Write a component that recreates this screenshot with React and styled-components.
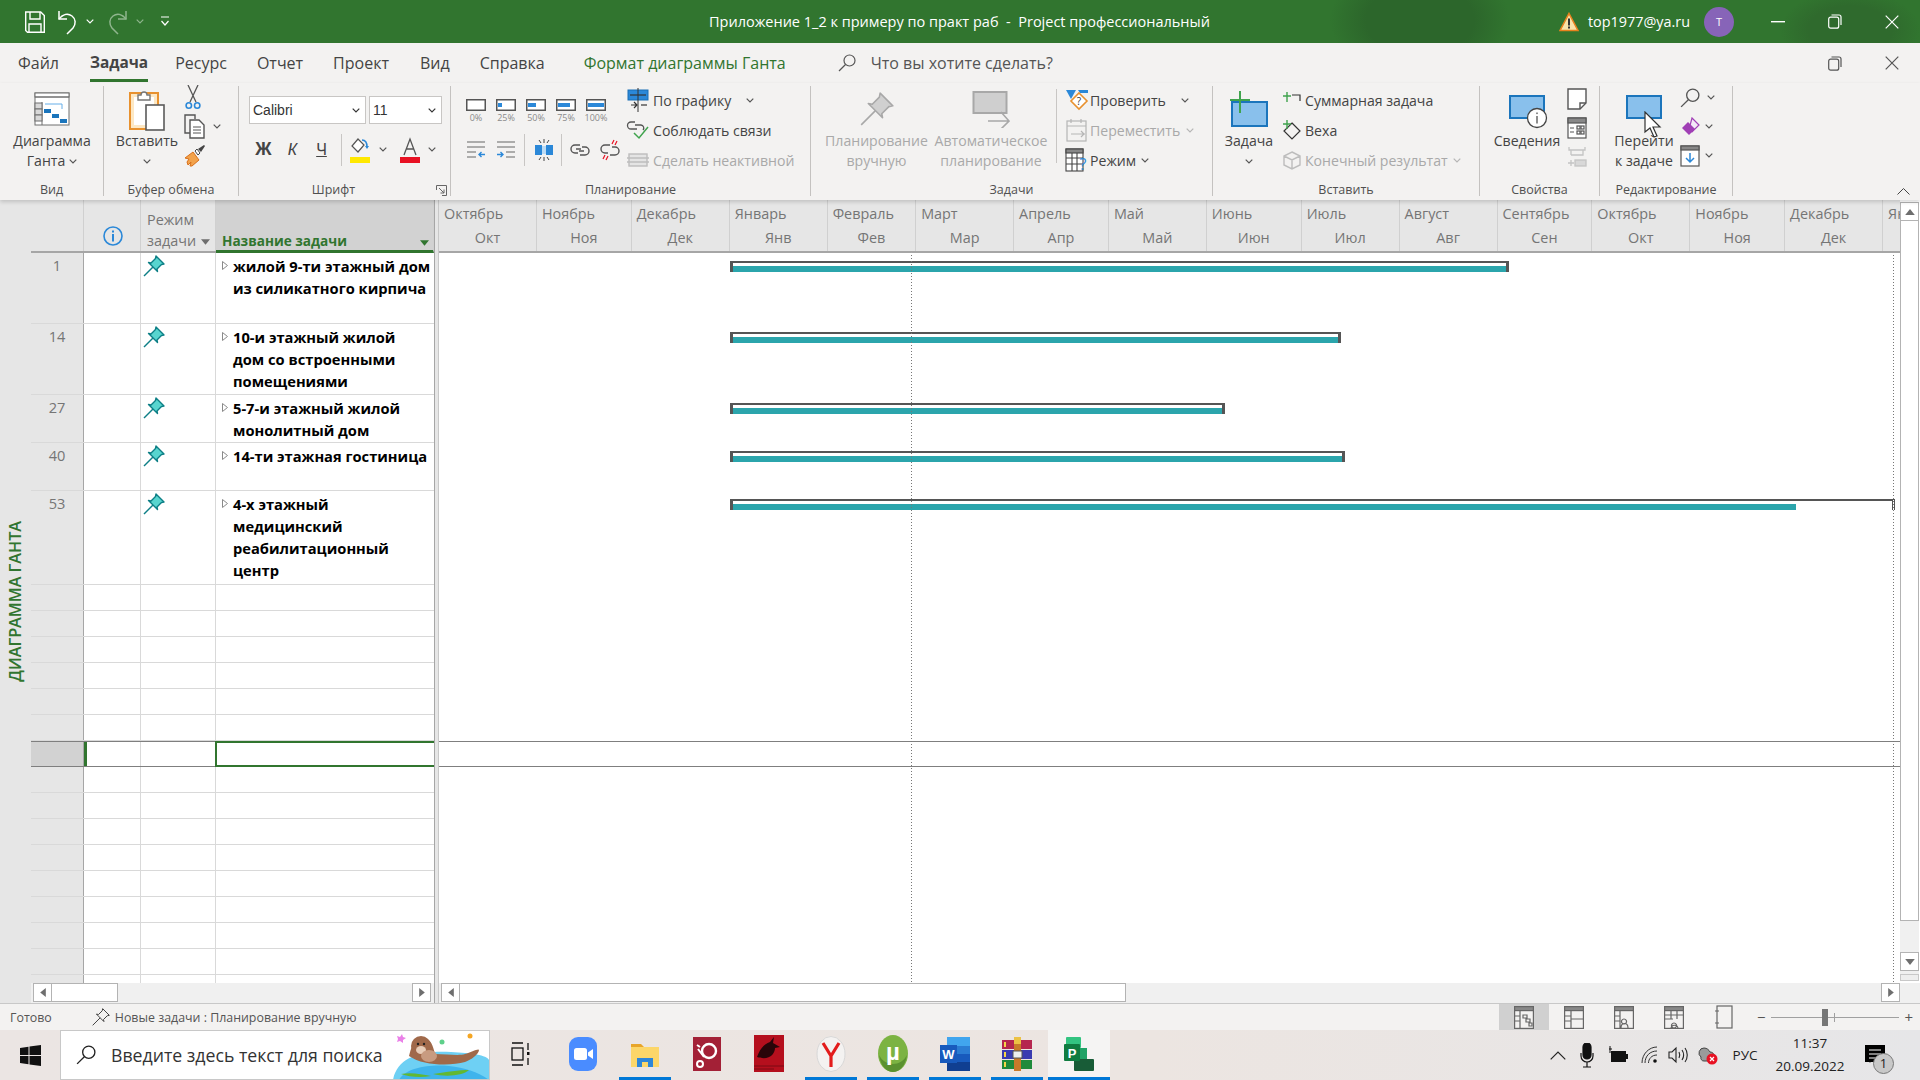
import React from 'react';
import styled, { createGlobalStyle } from 'styled-components';

const green = '#31752f';
const ribbonText = '#444444';
const disabledText = '#a9a9a9';

const GlobalStyle = createGlobalStyle`
  html, body { margin: 0; padding: 0; background: #fff; }
  body { font-family: "Open Sans", "Noto Sans", "Liberation Sans", sans-serif; }
  svg { display: block; flex: none; }
`;

const Page = styled.div`
  display: flex;
  flex-direction: column;
  width: 1920px;
  height: 1080px;
  overflow: hidden;
`;

/* ---------- title bar ---------- */
const TitleBar = styled.header`
  display: flex;
  align-items: center;
  flex: none;
  height: 43px;
  color: #fff;
  background:
    radial-gradient(ellipse 90px 60px at 1420px 20px, #2c662b 60%, transparent 100%),
    radial-gradient(ellipse 70px 40px at 1850px 30px, #2f6a2d 60%, transparent 100%),
    ${green};
`;

const QuickAccess = styled.div`
  display: flex;
  align-items: center;
  width: 709px;
  padding-left: 23px;
  box-sizing: border-box;
`;

const QuickButton = styled.span`
  display: flex;
  align-items: center;
  justify-content: center;
  width: ${({ $w }) => $w}px;
  margin-left: ${({ $ml = 0 }) => $ml}px;
`;

const DocTitle = styled.div`
  width: 500px;
  font-size: 14.5px;
  text-align: center;
  white-space: pre;
`;

const AccountArea = styled.div`
  display: flex;
  align-items: center;
  margin-left: auto;
`;

const UserName = styled.span`
  margin: 0 14px 0 9px;
  font-size: 14.4px;
`;

const Avatar = styled.span`
  display: flex;
  align-items: center;
  justify-content: center;
  width: 30px;
  height: 30px;
  margin-right: 15px;
  border-radius: 50%;
  background: #8764b8;
  font-size: 11px;
`;

const WindowButton = styled.span`
  display: flex;
  align-items: center;
  justify-content: center;
  width: 57px;
`;

/* ---------- tabs ---------- */
const TabsRow = styled.nav`
  display: flex;
  align-items: stretch;
  flex: none;
  height: 40px;
  background: #f3f2f1;
`;

const Tab = styled.span`
  display: flex;
  align-items: center;
  height: 33px;
  margin-top: 3px;
  margin-left: ${({ $x }) => $x}px;
  border-bottom: ${({ $active }) => ($active ? `3px solid ${green}` : '3px solid transparent')};
  color: ${({ $contextual }) => ($contextual ? green : ribbonText)};
  font-size: ${({ $active }) => ($active ? 15.4 : 16)}px;
  font-weight: ${({ $active }) => ($active ? 700 : 400)};
  white-space: nowrap;
`;

const TellMe = styled.div`
  display: flex;
  align-items: center;
  gap: 15px;
  margin-left: 52px;
  color: #555;
  font-size: 16px;
`;

const DocControls = styled.div`
  display: flex;
  align-items: center;
  margin-left: auto;
`;

/* ---------- ribbon ---------- */
const Ribbon = styled.section`
  position: relative;
  z-index: 2;
  display: flex;
  flex: none;
  height: 117px;
  padding-top: 3px;
  box-sizing: border-box;
  background: #f3f2f1;
  box-shadow: 0 2px 4px rgba(0, 0, 0, 0.16);
  color: ${ribbonText};
  font-size: 14.1px;
`;

const Group = styled.div`
  display: flex;
  flex-direction: column;
  flex: none;
  width: ${({ $w }) => $w}px;
  height: 110px;
  box-sizing: border-box;
  border-right: 1px solid #c4c2c0;
`;

const GroupBody = styled.div`
  display: flex;
  flex: none;
  height: 94px;
  padding-left: ${({ $pl = 0 }) => $pl}px;
`;

const GroupLabel = styled.div`
  position: relative;
  flex: none;
  height: 16px;
  padding-right: ${({ $pr = 0 }) => $pr}px;
  color: #505050;
  font-size: 12.5px;
  line-height: 20px;
  text-align: center;
`;

const Launcher = styled.span`
  position: absolute;
  top: 5px;
  right: 3px;
`;

const Large = styled.div`
  display: flex;
  flex-direction: column;
  align-items: center;
  flex: none;
  width: ${({ $w }) => $w}px;
  margin-left: ${({ $ml = 0 }) => $ml}px;
  color: ${({ $off }) => ($off ? disabledText : ribbonText)};
`;

const LargeIcon = styled.div`
  display: flex;
  align-items: center;
  justify-content: center;
  height: 45px;
`;

const LargeLine = styled.div`
  display: flex;
  align-items: center;
  gap: 4px;
  height: 20px;
  line-height: 20px;
  white-space: nowrap;
`;

const Stack = styled.div`
  display: flex;
  flex-direction: column;
  flex: none;
  margin-top: ${({ $mt = -1 }) => $mt}px;
`;

const StackRow = styled.div`
  display: flex;
  align-items: center;
  height: ${({ $h = 30 }) => $h}px;
  color: ${({ $off }) => ($off ? disabledText : ribbonText)};
  white-space: nowrap;
`;

const IconSlot = styled.span`
  display: flex;
  align-items: center;
  justify-content: center;
  flex: none;
  width: ${({ $w }) => $w}px;
  margin-right: ${({ $mr = 0 }) => $mr}px;
`;

const Divider = styled.span`
  flex: none;
  align-self: center;
  width: 1px;
  height: ${({ $h = 32 }) => $h}px;
  margin: ${({ $m = '0' }) => $m};
  background: #c8c6c4;
`;

const FontColumn = styled.div`
  display: flex;
  flex-direction: column;
  padding-top: 10px;
`;

const SelectRow = styled.div`
  display: flex;
  gap: 3px;
  height: 28px;
`;

const FieldBox = styled.div`
  display: flex;
  align-items: center;
  justify-content: space-between;
  width: ${({ $w }) => $w}px;
  padding: 0 5px 0 3px;
  box-sizing: border-box;
  border: 1px solid #c8c6c4;
  background: #fff;
  color: #333;
  font-family: "Liberation Sans", sans-serif;
  font-size: 14px;
`;

const FormatRow = styled.div`
  display: flex;
  align-items: center;
  height: 51px;
`;

const FormatLetter = styled.span`
  display: flex;
  justify-content: center;
  width: 29px;
  color: #444;
  font-family: "Liberation Sans", sans-serif;
  font-size: ${({ $b }) => ($b ? 18 : 16)}px;
  font-weight: ${({ $b }) => ($b ? 700 : 400)};
  font-style: ${({ $i }) => ($i ? 'italic' : 'normal')};
  text-decoration: ${({ $u }) => ($u ? 'underline' : 'none')};
`;

const PercentColumn = styled.div`
  display: flex;
  flex-direction: column;
  flex: none;
  width: 164px;
  padding-top: 13px;
`;

const PercentRow = styled.div`
  display: flex;
  height: 33px;
`;

const PercentItem = styled.div`
  display: flex;
  flex-direction: column;
  align-items: center;
  gap: 1px;
  width: 30px;
  color: #8a8a8a;
  font-size: 9px;
  line-height: 11px;
`;

const PlanRow = styled.div`
  display: flex;
  align-items: center;
  height: 36px;
`;

const Collapse = styled.span`
  position: absolute;
  right: 10px;
  bottom: 5px;
`;

/* ---------- workspace ---------- */
const Workspace = styled.main`
  display: flex;
  flex: 1;
  min-height: 0;
`;

const SideStrip = styled.aside`
  display: flex;
  align-items: center;
  justify-content: center;
  flex: none;
  width: 31px;
  padding-right: 2px;
  box-sizing: border-box;
  background: #e6e6e6;
`;

const SideLabel = styled.span`
  writing-mode: vertical-rl;
  transform: rotate(180deg);
  color: ${green};
  font-size: 16.2px;
  font-weight: 600;
  white-space: nowrap;
`;

const ViewArea = styled.div`
  display: flex;
  flex-direction: column;
  flex: 1;
  min-width: 0;
`;

const Panes = styled.div`
  display: flex;
  flex: 1;
  min-height: 0;
`;

const TablePane = styled.div`
  flex: none;
  width: 403px;
  overflow: hidden;
`;

const TableRow = styled.div`
  display: grid;
  grid-template-columns: 53px 57px 75px 218px;
  height: ${({ $h }) => $h}px;
  box-sizing: border-box;
  border-top: ${({ $selected }) => ($selected ? '1px solid #7f7f7f' : 'none')};
  border-bottom: 1px solid ${({ $selected }) => ($selected ? '#7f7f7f' : '#d9d9d9')};
`;

const HeaderRow = styled(TableRow)`
  border-bottom: 2px solid #a6a6a6;
  background: #e6e6e6;
`;

const HeadCell = styled.div`
  display: flex;
  align-items: ${({ $center }) => ($center ? 'center' : 'flex-end')};
  justify-content: ${({ $center }) => ($center ? 'center' : 'flex-start')};
  padding: ${({ $center }) => ($center ? '20px 0 0 1px' : '0 4px 0 6px')};
  box-sizing: border-box;
  border-right: 1px solid #d0d0d0;
  color: #757575;
  font-size: 14.4px;
  line-height: 21px;
  white-space: nowrap;
`;

const NameHead = styled(HeadCell)`
  justify-content: space-between;
  margin-bottom: -2px;
  padding-bottom: 0;
  border-bottom: 3px solid ${green};
  background: #d2d2d2;
  color: ${green};
  font-size: 13.6px;
  font-weight: 700;
  line-height: 18px;
`;

const HeadArrow = styled.span`
  display: inline-block;
  margin-left: 5px;
  vertical-align: middle;
`;

const NameArrow = styled.span`
  margin-bottom: 4px;
`;

const RowHead = styled.div`
  box-sizing: border-box;
  padding-top: 1px;
  border-right: 1px solid #a6a6a6;
  background: ${({ $selected }) => ($selected ? '#d2d2d2' : '#e6e6e6')};
  color: #757575;
  font-size: 14.6px;
  line-height: 22px;
  text-align: center;
`;

const InfoCell = styled.div`
  border-right: 1px solid #d9d9d9;
  ${({ $selected }) => ($selected ? `box-shadow: inset 3px 0 0 ${green};` : '')}
`;

const ModeCell = styled.div`
  box-sizing: border-box;
  padding: 1px 0 0 1px;
  border-right: 1px solid #d9d9d9;
`;

const NameCell = styled.div`
  display: flex;
  box-sizing: border-box;
  padding: 0 0 0 4px;
  border-left: 1px solid #d9d9d9;
  margin-left: -1px;
  ${({ $selected }) => ($selected ? `border: 2px solid ${green}; border-right: none; margin-top: -1px; margin-bottom: -1px;` : '')}
`;

const Expander = styled.span`
  flex: none;
  width: 11px;
  padding: 8px 0 0 2px;
`;

const TaskName = styled.div`
  color: #000;
  font-size: 14.7px;
  font-weight: 700;
  line-height: 22px;
  padding-top: 2px;
  white-space: nowrap;
`;

const Splitter = styled.div`
  flex: none;
  width: 3px;
  border-left: 1px solid #a6a6a6;
  border-right: 1px solid #c8c8c8;
  background: #e6e6e6;
`;

const ChartPane = styled.div`
  position: relative;
  flex: none;
  width: 1461px;
  overflow: hidden;
`;

const TimeHeader = styled.div`
  display: flex;
  height: 53px;
  box-sizing: border-box;
  border-bottom: 2px solid #a6a6a6;
  background: #e6e6e6;
`;

const Month = styled.div`
  flex: none;
  width: ${({ $w }) => $w}px;
  box-sizing: border-box;
  padding-top: 2px;
  border-right: 1px solid #d0d0d0;
  color: #757575;
  font-size: 14.4px;
  line-height: 24px;
  white-space: nowrap;
`;

const MonthFull = styled.div`
  padding-left: 5px;
`;

const MonthShort = styled.div`
  text-align: center;
`;

const ChartRow = styled.div`
  height: ${({ $h }) => $h}px;
  box-sizing: border-box;
  padding-top: 8px;
  border-top: ${({ $selected }) => ($selected ? '1px solid #7f7f7f' : 'none')};
  border-bottom: ${({ $selected }) => ($selected ? '1px solid #7f7f7f' : 'none')};
`;

const SummaryBar = styled.div`
  width: ${({ $w }) => $w}px;
  height: 11px;
  margin-left: 291px;
  box-sizing: border-box;
  border-style: solid;
  border-color: #555;
  border-width: 2px 3px 0 3px;
  border-right-style: ${({ $open }) => ($open ? 'double' : 'solid')};
`;

const BarFill = styled.div`
  width: ${({ $w }) => $w};
  height: 6px;
  margin-top: 3px;
  background: #2ba5ac;
`;

const DateLine = styled.div`
  position: absolute;
  top: 55px;
  bottom: 0;
  left: ${({ $x }) => $x}px;
  width: 1px;
  background: repeating-linear-gradient(#777 0 1px, transparent 1px 3px);
`;

const VScroll = styled.div`
  display: flex;
  flex-direction: column;
  flex: none;
  width: 19px;
  margin-top: 2px;
  margin-bottom: 2px;
  box-sizing: border-box;
  background: #f0f0f0;
`;

const ScrollBtn = styled.div`
  display: flex;
  align-items: center;
  justify-content: center;
  flex: none;
  width: 19px;
  height: 19px;
  box-sizing: border-box;
  border: 1px solid #b3b3b3;
  background: #fff;
`;

const VThumb = styled.div`
  flex: none;
  height: 700px;
  box-sizing: border-box;
  border: 1px solid #b3b3b3;
  border-width: 0 1px 1px;
  background: #fff;
`;

const VGap = styled.div`
  flex: 1;
`;

const VGrip = styled.div`
  flex: none;
  height: 5px;
  margin-top: 3px;
  border: 1px solid #c8c8c8;
  background: #eee;
`;

const HScrollRow = styled.div`
  display: flex;
  flex: none;
  height: 20px;
`;

const HScroll = styled.div`
  display: flex;
  flex: none;
  width: ${({ $w }) => $w}px;
  padding-left: 2px;
  box-sizing: border-box;
  background: #f0f0f0;
`;

const HThumb = styled.div`
  flex: none;
  width: ${({ $w }) => $w}px;
  height: 19px;
  box-sizing: border-box;
  border: 1px solid #b3b3b3;
  border-left: none;
  background: #fff;
`;

const HEnd = styled.div`
  margin-left: auto;
  margin-right: ${({ $mr = 3 }) => $mr}px;
`;

/* ---------- status bar ---------- */
const StatusBar = styled.footer`
  display: flex;
  align-items: stretch;
  flex: none;
  height: 27px;
  box-sizing: border-box;
  border-top: 1px solid #c8c8c8;
  background: #f3f2f1;
  color: #555;
  font-size: 12.4px;
`;

const StatusText = styled.span`
  display: flex;
  align-items: center;
  gap: 4px;
  margin-left: ${({ $ml }) => $ml}px;
  white-space: nowrap;
`;

const ViewButtons = styled.div`
  display: flex;
  margin-left: auto;
`;

const ViewButton = styled.span`
  display: flex;
  align-items: center;
  justify-content: center;
  width: 50px;
  background: ${({ $active }) => ($active ? '#d0d0d0' : 'transparent')};
`;

const Zoom = styled.div`
  display: flex;
  align-items: center;
  width: 171px;
  padding: 0 7px 0 8px;
  box-sizing: border-box;
  color: #555;
  font-size: 15px;
`;

const ZoomTrack = styled.div`
  position: relative;
  flex: 1;
  height: 1px;
  margin: 0 5px;
  background: #a0a0a0;
`;

const ZoomThumb = styled.span`
  position: absolute;
  top: -8px;
  left: 51px;
  width: 6px;
  height: 17px;
  background: #767676;
`;

const ZoomTick = styled.span`
  position: absolute;
  top: -4px;
  left: 63px;
  width: 1px;
  height: 9px;
  background: #a0a0a0;
`;

/* ---------- taskbar ---------- */
const Taskbar = styled.div`
  display: flex;
  align-items: stretch;
  flex: none;
  height: 50px;
  background: linear-gradient(90deg, #ebe5e3 0%, #ece5e1 60%, #e6e6e8 100%);
`;

const StartButton = styled.span`
  display: flex;
  align-items: center;
  justify-content: center;
  flex: none;
  width: 60px;
`;

const SearchBox = styled.div`
  display: flex;
  align-items: center;
  flex: none;
  width: 430px;
  overflow: hidden;
  box-sizing: border-box;
  border: 1px solid #c8c8c8;
  background: #fff;
  color: #333;
  font-size: 17.7px;
`;

const SearchHint = styled.span`
  flex: 1;
  white-space: nowrap;
`;

const TaskButton = styled.span`
  display: flex;
  align-items: center;
  justify-content: center;
  flex: none;
  width: ${({ $active }) => ($active ? 62 : 52)}px;
  margin: ${({ $active }) => ($active ? '0' : '0 5px')};
  box-sizing: border-box;
  border-bottom: 3px solid ${({ $open }) => ($open ? '#0078d7' : 'transparent')};
  background: ${({ $active }) => ($active ? '#f5f4f3' : 'transparent')};
`;

const Tray = styled.div`
  display: flex;
  align-items: stretch;
  margin-left: auto;
  padding-right: 19px;
  color: #222;
`;

const TrayItem = styled.span`
  display: flex;
  align-items: center;
  justify-content: center;
  flex: none;
  width: ${({ $w }) => $w}px;
  font-size: 13.5px;
`;

const Clock = styled(TrayItem)`
  flex-direction: column;
  gap: 4px;
  line-height: 19px;
`;

const NoticeBadge = styled.span`
  position: absolute;
  right: -9px;
  bottom: -9px;
  width: 19px;
  height: 19px;
  border: 1px solid #777;
  border-radius: 50%;
  background: #c8c8c8;
  font-size: 13px;
  line-height: 19px;
  text-align: center;
`;

const NoticeIcon = styled.span`
  position: relative;
  display: block;
  width: 20px;
  height: 20px;
  margin-right: 6px;
`;

const CursorHolder = styled.span`
  position: absolute;
  top: 22px;
  left: 22px;
`;

const CardHolder = styled.span`
  position: relative;
  display: block;
`;

const InfoHolder = styled.span`
  position: absolute;
  right: 1px;
  bottom: 0;
`;

/* ---------- drawn icons ---------- */
const Chevron = ({ color = '#555', w = 8 }) => (
  <svg width={w} height="5" viewBox="0 0 8 5">
    <path d="M.7.7 4 4l3.3-3.3" fill="none" stroke={color} strokeWidth="1.2" />
  </svg>
);

const Tri = ({ dir = 'down', color = '#6e6e6e', size = 9 }) => {
  const points = { down: '0,0 8,0 4,5', up: '0,5 8,5 4,0', left: '5,0 5,8 0,4', right: '0,0 0,8 5,4' }[dir];
  const horizontal = dir === 'left' || dir === 'right';
  return (
    <svg width={horizontal ? 6 : size} height={horizontal ? size : 6} viewBox={horizontal ? '0 0 5 8' : '0 0 8 5'}>
      <polygon points={points} fill={color} />
    </svg>
  );
};

const SaveIcon = () => (
  <svg width="22" height="24" viewBox="0 0 22 24" fill="none" stroke="#fff" strokeWidth="1.4">
    <path d="M1.7 2h15l3.6 3.6v16.7H3.5L1.7 20.5z" />
    <path d="M6 2v7h10V2M5 22v-8h12v8" />
  </svg>
);

const UndoIcon = ({ flip, color = '#fff' }) => (
  <svg width="22" height="26" viewBox="0 0 22 26" fill="none" stroke={color} strokeWidth="1.5">
    <g transform={flip ? 'translate(22 0) scale(-1 1)' : undefined}>
      <path d="M2 2v8h8" />
      <path d="M2 10c4-5 9-6 13-3 4 3 4 8 1 12l-6 6" />
    </g>
  </svg>
);

const QatIcon = () => (
  <svg width="10" height="11" viewBox="0 0 10 11" fill="none" stroke="#fff" strokeWidth="1.2">
    <path d="M1 1h8M1.5 5 5 9l3.5-4" />
  </svg>
);

const WarningIcon = () => (
  <svg width="20" height="20" viewBox="0 0 20 20">
    <path d="M10 1.5 19 18.5H1z" fill="#f9e3a8" stroke="#e8821e" strokeWidth="1.6" />
    <rect x="9" y="6.5" width="2" height="7" fill="#333" />
    <rect x="9" y="14.5" width="2" height="2" fill="#333" />
  </svg>
);

const MinIcon = () => (
  <svg width="14" height="2" viewBox="0 0 14 2"><rect width="14" height="1.4" fill="#fff" /></svg>
);

const RestoreIcon = ({ color = '#fff' }) => (
  <svg width="14" height="15" viewBox="0 0 14 15" fill="none" stroke={color} strokeWidth="1.2">
    <rect x=".7" y="3.2" width="10" height="11" rx="2" />
    <path d="M3.5 1h7.5a2 2 0 0 1 2 2v8" />
  </svg>
);

const CloseIcon = ({ color = '#fff' }) => (
  <svg width="14" height="14" viewBox="0 0 14 14" stroke={color} strokeWidth="1.2">
    <path d="M.7.7l12.6 12.6M13.3.7.7 13.3" />
  </svg>
);

const SearchIcon = ({ size = 18, color = '#555' }) => (
  <svg width={size} height={size} viewBox="0 0 18 18" fill="none" stroke={color} strokeWidth="1.2">
    <circle cx="11.5" cy="6.5" r="5.5" />
    <path d="M7.5 10.5 1 17" />
  </svg>
);

const GanttIcon = () => (
  <svg width="36" height="34" viewBox="0 0 36 34">
    <rect x="1" y="1" width="34" height="32" fill="#fff" stroke="#6e6e6e" />
    <rect x="1" y="1" width="34" height="4" fill="#fff" stroke="#6e6e6e" />
    <path d="M1 5h34M8 10v23" stroke="#6e6e6e" fill="none" />
    <rect x="1" y="11" width="7" height="6" fill="#d8d8d8" stroke="#6e6e6e" />
    <rect x="1" y="17" width="7" height="6" fill="#d8d8d8" stroke="#6e6e6e" />
    <rect x="1" y="23" width="7" height="6" fill="#d8d8d8" stroke="#6e6e6e" />
    <path d="M11 12h17v5" fill="none" stroke="#66aee8" />
    <rect x="10" y="17" width="7" height="4" fill="#1b75bc" />
    <rect x="18" y="22" width="7" height="4" fill="#1b75bc" />
    <rect x="26" y="27" width="7" height="4" fill="#1b75bc" />
  </svg>
);

const PasteIcon = () => (
  <svg width="36" height="44" viewBox="0 0 36 44">
    <rect x="1" y="6" width="28" height="36" fill="#fde8c4" stroke="#e8912e" strokeWidth="2" />
    <rect x="5" y="10" width="20" height="28" fill="#fff" />
    <path d="M9 8h3a3 3 0 0 1 6 0h3v5H9z" fill="#fff" stroke="#767676" strokeWidth="1.4" />
    <rect x="17" y="18" width="18" height="25" fill="#fff" stroke="#5a5a5a" strokeWidth="1.6" />
  </svg>
);

const CutIcon = () => (
  <svg width="16" height="25" viewBox="0 0 16 25" fill="none">
    <path d="M3 0 11 17M13 0 5 17" stroke="#555" strokeWidth="1.3" />
    <circle cx="3.8" cy="20.5" r="2.7" stroke="#2b88d8" strokeWidth="1.6" />
    <circle cx="12.2" cy="20.5" r="2.7" stroke="#2b88d8" strokeWidth="1.6" />
  </svg>
);

const CopyIcon = () => (
  <svg width="22" height="25" viewBox="0 0 22 25" fill="none" stroke="#555" strokeWidth="1.4">
    <path d="M9 19H1V1h10v4" />
    <path d="M6 6h9l5 5v13H6z" fill="#fff" />
    <path d="M9 13h8M9 16h8M9 19h8" strokeWidth="1" />
  </svg>
);

const BrushIcon = () => (
  <svg width="22" height="23" viewBox="0 0 22 23">
    <path d="M1 14l8-6 6 8-7 6H6l1-4-3 3-1-3 2-3z" fill="#f2a24b" stroke="#d9701a" />
    <path d="M11 7l2-2 3 4-2 2z" fill="#fff" stroke="#444" />
    <path d="M14 5l6-4 1 1-4 6z" fill="#444" />
  </svg>
);

const FillIcon = () => (
  <svg width="20" height="26" viewBox="0 0 20 26">
    <path d="M8 2l6 6-6 7-6-6z" fill="#fff" stroke="#555" strokeWidth="1.2" />
    <path d="M12 3c4 0 5 3 5 7" fill="none" stroke="#2b88d8" strokeWidth="1.6" />
    <path d="M17 12l-2-3h4z" fill="#2b88d8" />
    <rect y="20" width="20" height="6" fill="#ffe800" />
  </svg>
);

const FontColorIcon = () => (
  <svg width="20" height="26" viewBox="0 0 20 26">
    <path d="M4 18 10 2l6 16M6 12h8" fill="none" stroke="#555" strokeWidth="1.3" />
    <rect y="20" width="20" height="6" fill="#e81123" />
  </svg>
);

const LauncherIcon = () => (
  <svg width="11" height="11" viewBox="0 0 11 11" fill="none" stroke="#666">
    <path d="M.5 5V.5H10.5V10.5H6M3 3l5 5M8 4.5V8H4.5" />
  </svg>
);

const PercentIcon = ({ fill }) => (
  <svg width="20" height="12" viewBox="0 0 20 12">
    <rect x=".75" y=".75" width="18.5" height="10.5" fill="#fff" stroke="#555" strokeWidth="1.5" />
    {fill > 0 && <rect x="2" y="4" width={fill} height="4" fill="#2b88d8" />}
  </svg>
);

const OutdentIcon = ({ flip }) => (
  <svg width="20" height="20" viewBox="0 0 20 20">
    <g transform={flip ? 'translate(20 0) scale(-1 1)' : undefined}>
      <path d="M1 2h18M1 7h18M1 12h9M1 17h9" stroke="#666" strokeWidth="1.2" />
      <path d="M19 14.5h-6M15.5 12 13 14.5l2.5 2.5" fill="none" stroke="#2b88d8" strokeWidth="1.4" />
    </g>
  </svg>
);

const SplitIcon = () => (
  <svg width="20" height="24" viewBox="0 0 20 24">
    <rect x="1" y="7" width="7" height="10" fill="#2b88d8" />
    <rect x="12" y="7" width="7" height="10" fill="#2b88d8" />
    <rect x="8" y="8" width="4" height="8" fill="#bcdcf5" />
    <path d="M10 1v4M5 2l2 3M15 2l-2 3M10 19v4M5 22l2-3M15 22l-2-3" stroke="#444" />
  </svg>
);

const LinkIcon = ({ broken }) => (
  <svg width="22" height="22" viewBox="0 0 22 22" fill="none" stroke="#555" strokeWidth="1.4">
    <path d="M11 6H6a4 4 0 0 0 0 8h3" />
    <path d="M11 16h5a4 4 0 0 0 0-8h-3" />
    {!broken && <path d="M7 10h5M15 12h-5" />}
    {broken && <path d="M15 1l-2 4M18 2l-2 4M7 21l2-4M4 20l2-4" stroke="#e81123" strokeWidth="1.2" />}
  </svg>
);

const ScheduleIcon = () => (
  <svg width="22" height="24" viewBox="0 0 22 24" fill="none">
    <rect x="1" y="2" width="20" height="10" fill="#2b88d8" stroke="#1a6fb5" />
    <path d="M3 7h16" stroke="#333" strokeWidth="1.2" />
    <path d="M11 0v24" stroke="#333" />
    <path d="M4 17h6M7 14l3 3-3 3" stroke="#333" strokeWidth="1.2" />
    <path d="M14 17h6" stroke="#333" strokeWidth="1.2" />
  </svg>
);

const RespectIcon = () => (
  <svg width="24" height="22" viewBox="0 0 24 22" fill="none">
    <path d="M9 3H5a3 3 0 0 0 0 7h6" stroke="#555" strokeWidth="1.3" />
    <path d="M9 6h6a3 3 0 0 1 2 5" stroke="#555" strokeWidth="1.3" />
    <path d="M8 14l5 5 9-11" stroke="#3fa34d" strokeWidth="1.5" />
  </svg>
);

const InactiveIcon = () => (
  <svg width="22" height="14" viewBox="0 0 22 14" fill="none" stroke="#bdbdbd" strokeWidth="1.4">
    <rect x="2" y="1" width="18" height="12" fill="#e4e4e4" />
    <path d="M0 5h22M0 9h22" />
  </svg>
);

const PinIcon = ({ size = 24, fill = '#58d5cf', stroke = '#0d7f86', sw = 1.4 }) => (
  <svg width={size} height={size} viewBox="0 0 24 24">
    <path d="M14 2l8 8-2.5.5L15 15l.5 2.5-9-9L9 9l4.5-4.5z" fill={fill} stroke={stroke} strokeWidth={sw} strokeLinejoin="round" />
    <path d="M11 13l-9 9" stroke={stroke} strokeWidth={sw} />
  </svg>
);

const AutoIcon = () => (
  <svg width="38" height="38" viewBox="0 0 38 38" fill="none">
    <rect x="1.5" y="2" width="33" height="21" fill="#cfcfcf" stroke="#a8a8a8" strokeWidth="2" />
    <path d="M16 31h20M29 22l8 9-8 8" stroke="#a8a8a8" strokeWidth="1.6" />
  </svg>
);

const InspectIcon = () => (
  <svg width="24" height="22" viewBox="0 0 24 22">
    <path d="M1 1h10l-5 9z" fill="#2b88d8" />
    <path d="M13 1h10v3l-8 0z" fill="#2b88d8" />
    <path d="M14 4l8 8-8 8-8-8z" fill="#fff" stroke="#e8912e" strokeWidth="1.6" />
    <text x="14" y="16" fontSize="10" textAnchor="middle" fill="#333">?</text>
  </svg>
);

const MoveIcon = () => (
  <svg width="22" height="24" viewBox="0 0 22 24" fill="none" stroke="#b5b5b5" strokeWidth="1.2">
    <rect x="1" y="3" width="19" height="20" />
    <path d="M1 8h19M5 1v4M15 1v4M5 16h14M15 13l3 3-3 3" />
  </svg>
);

const ModeIcon = () => (
  <svg width="24" height="24" viewBox="0 0 24 24" fill="none" stroke="#444" strokeWidth="1.1">
    <rect x="1" y="1" width="17" height="22" fill="#fff" />
    <rect x="1" y="1" width="17" height="4" fill="#888" />
    <path d="M1 10h17M1 16h17M7 5v18M12 5v18" />
    <text x="18" y="22" fontSize="16" fill="#2b88d8" stroke="none" textAnchor="middle">?</text>
  </svg>
);

const NewTaskIcon = () => (
  <svg width="38" height="36" viewBox="0 0 38 36">
    <rect x="2" y="11" width="35" height="24" fill="#89c0ec" stroke="#1b75bc" strokeWidth="2" />
    <path d="M10 0v22M0 9h20" stroke="#3fa34d" strokeWidth="2" />
  </svg>
);

const SummaryIcon = () => (
  <svg width="18" height="18" viewBox="0 0 18 18" fill="none">
    <path d="M4 1v10M0 5h8" stroke="#3fa34d" strokeWidth="1.4" />
    <path d="M9 4h8v6" stroke="#333" strokeWidth="1.2" />
  </svg>
);

const MilestoneIcon = () => (
  <svg width="20" height="20" viewBox="0 0 20 20" fill="none">
    <path d="M10 3l8 8-8 8-8-8z" stroke="#333" strokeWidth="1.2" />
    <path d="M5 0v9M1 4h8" stroke="#3fa34d" strokeWidth="1.4" />
  </svg>
);

const DeliverableIcon = () => (
  <svg width="20" height="20" viewBox="0 0 20 20" fill="none" stroke="#bdbdbd" strokeWidth="1.4">
    <path d="M10 2l8 4v9l-8 4-8-4V6zM2 6l8 4 8-4M10 10v9" />
  </svg>
);

const BlueCard = () => (
  <svg width="44" height="40" viewBox="0 0 44 40">
    <rect x="5" y="7" width="34" height="22" fill="#89c0ec" stroke="#1b75bc" strokeWidth="2" />
  </svg>
);

const NoteIcon = () => (
  <svg width="20" height="22" viewBox="0 0 20 22" fill="#fff" stroke="#555" strokeWidth="1.4">
    <path d="M1 1h18v14l-6 6H1z" />
    <path d="M13 21v-6h6" fill="none" />
  </svg>
);

const DetailsIcon = () => (
  <svg width="20" height="22" viewBox="0 0 20 22" fill="#fff" stroke="#555" strokeWidth="1.2">
    <rect x="1" y="1" width="18" height="20" />
    <rect x="1" y="1" width="18" height="5" fill="#888" />
    <path d="M3 11h4M3 15h4" />
    <rect x="10" y="9" width="3" height="3" />
    <rect x="14" y="9" width="3" height="3" />
    <rect x="10" y="14" width="3" height="3" />
    <rect x="14" y="14" width="3" height="3" />
  </svg>
);

const AddTimelineIcon = () => (
  <svg width="20" height="22" viewBox="0 0 20 22" fill="none" stroke="#c4c4c4" strokeWidth="1.3">
    <path d="M2 1v3h16V1M4 9h12V4M4 4v5M1 17h6M4 14v6" />
    <rect x="8" y="14" width="11" height="6" fill="#d8d8d8" />
  </svg>
);

const EraserIcon = () => (
  <svg width="20" height="20" viewBox="0 0 20 20">
    <path d="M12 1l7 7-7 7-3-3z" fill="#f3e8f7" stroke="#a03fb5" strokeWidth="1.2" />
    <path d="M8 5l7 7-6 6-7-7z" fill="#a03fb5" />
  </svg>
);

const FillDownIcon = () => (
  <svg width="20" height="22" viewBox="0 0 20 22" fill="#fff" stroke="#555" strokeWidth="1.2">
    <rect x="1" y="1" width="18" height="20" />
    <rect x="1" y="1" width="18" height="4" fill="#888" />
    <path d="M10 8v9M6 13l4 4 4-4" stroke="#2b88d8" strokeWidth="1.5" fill="none" />
  </svg>
);

const InfoHead = () => (
  <svg width="20" height="20" viewBox="0 0 20 20" fill="none">
    <circle cx="10" cy="10" r="9" stroke="#2b88d8" strokeWidth="1.6" />
    <rect x="9" y="8" width="2" height="7.5" fill="#2b88d8" />
    <rect x="9" y="4.5" width="2" height="2" fill="#2b88d8" />
  </svg>
);

const InfoBadge = () => (
  <svg width="22" height="22" viewBox="0 0 22 22">
    <circle cx="11" cy="11" r="9.5" fill="#fff" stroke="#444" strokeWidth="1.3" />
    <rect x="10.4" y="9" width="1.2" height="7.5" fill="#444" />
    <rect x="10.4" y="5.500" width="1.2" height="1.6" fill="#444" />
  </svg>
);

const ExpandArrow = () => (
  <svg width="6" height="9" viewBox="0 0 6 9"><path d="M.5.5 5.5 4.500.5 8.500z" fill="#fff" stroke="#8a8a8a" /></svg>
);

const ViewGlyph = ({ kind }) => (
  <svg width="20" height="23" viewBox="0 0 20 23" fill="none" stroke="#666" strokeWidth="1.2">
    <rect x=".6" y=".6" width="18.800" height="21.800" fill="#f3f2f1" />
    <rect x=".6" y=".6" width="18.800" height="4" fill="#888" />
    {kind === 'gantt' && <path d="M6 5v17M1 10h5M1 15h5M9 9h4v3H9zM12 13h4v3h-4zM15 17h3v3h-3z" />}
    {kind === 'split' && <path d="M7 5v17M1 10h6M1 15h6M7 13h12" />}
    {kind === 'team' && <path d="M6 5v17M1 10h5M1 15h5M10 13a2.500 2.500 0 1 0 .01 0M7 22c0-6 7-6 7 0" />}
    {kind === 'sheet' && <path d="M7 5v8M13 5v8M1 9h18M1 13h8M10 17a2.500 2.500 0 1 0 .01 0M7 23c0-5 7-5 7 0" />}
  </svg>
);

const CalendarGlyph = () => (
  <svg width="18" height="24" viewBox="0 0 18 24" fill="#f3f2f1" stroke="#666" strokeWidth="1.2">
    <rect x="2" y="1" width="15" height="22" />
    <path d="M0 6h4M0 18h4" />
  </svg>
);

const WinLogo = () => (
  <svg width="21" height="21" viewBox="0 0 21 21" fill="#111">
    <path d="M0 3l8.500-1.200v8.200H0zM9.500 1.600 21 0v10H9.500zM0 11h8.500v8.200L0 18zM9.500 11H21v10L9.500 19.400z" />
  </svg>
);

const Otter = () => (
  <svg width="100" height="50" viewBox="0 0 100 50">
    <path d="M4 50C8 28 30 20 62 22c20 1 36 3 38 8v20z" fill="#6ed0f4" />
    <path d="M10 50c6-12 30-16 50-14 16 2 30 6 40 14z" fill="#3fb4ec" />
    <path d="M12 44c10-2 20 0 30 2-10 2-22 1-30-2zM44 44c14-2 26-4 36-4-6 6-24 7-36 4z" fill="#62b832" />
    <path d="M20 26c2-8 4-16 14-18 8 0 10 8 12 16 12 0 24 2 30 0 6-2 14-6 14-4 0 4-8 10-14 12-14 4-42 4-56-6z" fill="#a0694a" />
    <circle cx="32" cy="16" r="10" fill="#a0694a" />
    <ellipse cx="32" cy="20" rx="5" ry="4" fill="#e8cdb8" />
    <circle cx="29" cy="14" r="1.200" fill="#222" />
    <circle cx="35" cy="14" r="1.200" fill="#222" />
    <ellipse cx="40" cy="26" rx="8" ry="6" fill="#c89b80" />
    <path d="M8 6l3 1 2-3 1 3 3 1-3 2 0 3-3-2-3 1 1-3z" fill="#ea80e8" />
    <circle cx="53" cy="12" r="2.500" fill="#5ed08a" />
    <circle cx="81" cy="6" r="2.500" fill="#f5a623" />
  </svg>
);

const TaskViewIcon = () => (
  <svg width="20" height="24" viewBox="0 0 20 24" fill="none" stroke="#111" strokeWidth="1.3">
    <path d="M1 1h11M1 23h11" />
    <rect x="1" y="6" width="11" height="12" />
    <path d="M17 1v7M17 16v7" />
    <rect x="16" y="10" width="2.500" height="3" fill="#111" stroke="none" />
  </svg>
);

const ZoomApp = () => (
  <svg width="28" height="34" viewBox="0 0 28 34">
    <rect width="28" height="34" rx="9" fill="#4a8cff" />
    <rect x="5" y="11" width="13" height="12" rx="2.500" fill="#fff" />
    <path d="M19 15.500l5-3.500v10l-5-3.500z" fill="#fff" />
  </svg>
);

const ExplorerApp = () => (
  <svg width="30" height="30" viewBox="0 0 30 30">
    <path d="M1 5h10l3 3h-13z" fill="#e8a52a" />
    <rect x="1" y="8" width="28" height="20" fill="#fcd669" />
    <path d="M7 28v-9h16v9h-5v-5h-6v5z" fill="#2e86d8" />
  </svg>
);

const GearApp = () => (
  <svg width="28" height="34" viewBox="0 0 28 34">
    <rect width="28" height="34" fill="#a32036" />
    <circle cx="16" cy="14" r="7" fill="#a32036" stroke="#fff" strokeWidth="2.400" />
    <circle cx="7" cy="27" r="3" fill="none" stroke="#fff" strokeWidth="2" />
    <path d="M11 20 5 12M4 8l3 2" stroke="#fff" strokeWidth="2" />
  </svg>
);

const DragonApp = () => (
  <svg width="30" height="37" viewBox="0 0 30 37">
    <rect width="30" height="37" fill="#b50f1d" />
    <path d="M3 22c3-8 7-13 13-15l4-5-1 6 7 4-5 1c0 6-6 13-18 9z" fill="#290509" />
    <path d="M0 31h30M0 34h20" stroke="#7a0b14" />
  </svg>
);

const YandexApp = () => (
  <svg width="30" height="36" viewBox="0 0 30 36">
    <ellipse cx="15" cy="18" rx="14" ry="17.500" fill="#f4f2f1" stroke="#d8d8d8" />
    <path d="M7 7l8 13 8-13M15 20v11" fill="none" stroke="#e31c1c" strokeWidth="3.200" />
  </svg>
);

const TorrentApp = () => (
  <svg width="30" height="37" viewBox="0 0 30 37">
    <ellipse cx="15" cy="18.500" rx="15" ry="18.500" fill="#7cb342" />
    <path d="M1 20c6 12 22 12 28 0-2 12-8 17-14 17S3 32 1 20z" fill="#5b9130" />
    <text x="15" y="25" fontSize="24" fontWeight="700" fill="#fff" textAnchor="middle" fontFamily="Liberation Sans">µ</text>
  </svg>
);

const WordApp = () => (
  <svg width="30" height="34" viewBox="0 0 30 34">
    <rect x="7" y="0" width="23" height="9" fill="#41a5ee" />
    <rect x="7" y="9" width="23" height="8" fill="#2b7cd3" />
    <rect x="7" y="17" width="23" height="8" fill="#185abd" />
    <rect x="7" y="25" width="23" height="9" fill="#103f91" />
    <rect x="0" y="8" width="17" height="18" fill="#185abd" />
    <text x="8.500" y="22" fontSize="13" fontWeight="700" fill="#fff" textAnchor="middle" fontFamily="Liberation Sans">W</text>
  </svg>
);

const RarApp = () => (
  <svg width="30" height="34" viewBox="0 0 30 34">
    <rect x="0" y="3" width="30" height="9" fill="#b5264f" />
    <rect x="0" y="13" width="30" height="9" fill="#3a3bb0" />
    <rect x="0" y="23" width="30" height="9" fill="#1f8a3b" />
    <path d="M3 5v5M3 15v5M3 25v5" stroke="#f5d547" strokeWidth="2" />
    <rect x="12" y="0" width="7" height="34" fill="#c87a2a" />
    <rect x="12" y="0" width="7" height="7" fill="#ecc244" />
    <rect x="11" y="14" width="9" height="7" fill="#eee" stroke="#555" />
  </svg>
);

const ProjectApp = () => (
  <svg width="30" height="34" viewBox="0 0 30 34">
    <rect x="2" y="0" width="15" height="11" rx="1" fill="#33c481" />
    <rect x="6" y="11" width="17" height="11" fill="#21a366" />
    <rect x="10" y="22" width="20" height="12" rx="1" fill="#185c37" />
    <rect x="0" y="7" width="16" height="17" rx="1" fill="#107c41" />
    <text x="8" y="21" fontSize="13" fontWeight="700" fill="#fff" textAnchor="middle" fontFamily="Liberation Sans">P</text>
  </svg>
);

const ChevronUpTray = () => (
  <svg width="16" height="9" viewBox="0 0 16 9" fill="none" stroke="#222" strokeWidth="1.2"><path d="M.7 8.300 8 1l7.300 7.300" /></svg>
);

const MicIcon = () => (
  <svg width="14" height="25" viewBox="0 0 14 25" fill="none" stroke="#111" strokeWidth="1.200">
    <rect x="3" y="0" width="8" height="16" rx="4" fill="#111" />
    <path d="M1 10v3a6 6 0 0 0 12 0v-3M7 19v5M3 24h8" />
  </svg>
);

const BatteryIcon = () => (
  <svg width="20" height="18" viewBox="0 0 20 18" fill="#111">
    <rect x="3" y="5" width="15" height="11" />
    <rect x="18" y="8" width="2" height="5" />
    <path d="M1 3h3M2 0v5M1 6l2 0" stroke="#111" fill="none" />
  </svg>
);

const WifiIcon = () => (
  <svg width="17" height="18" viewBox="0 0 17 18" fill="none" stroke="#333">
    <path d="M1 17C1 8 8 1 16 1M4 17c0-7 5-12 12-12M7.500 17c0-4 3-8 8.500-8" />
    <circle cx="14" cy="15" r="1.800" fill="#111" stroke="none" />
  </svg>
);

const SpeakerIcon = () => (
  <svg width="20" height="20" viewBox="0 0 20 20" fill="none" stroke="#222" strokeWidth="1.100">
    <path d="M1 7v6h3l4 4V3L4 7z" />
    <path d="M11 7c1 2 1 4 0 6M14 5c2 3 2 7 0 10M17 3c3 4 3 10 0 14" />
  </svg>
);

const CloudOff = () => (
  <svg width="20" height="20" viewBox="0 0 20 20">
    <path d="M3 12a5 5 0 0 1 3-9c3 0 5 2 6 4a4 4 0 0 1 0 9H6a3 3 0 0 1-3-4z" fill="#9a9a9a" stroke="#444" />
    <circle cx="14" cy="14" r="5.500" fill="#e81123" />
    <path d="M12 12l4 4M16 12l-4 4" stroke="#fff" strokeWidth="1.200" />
  </svg>
);

const NoticeGlyph = () => (
  <svg width="20" height="20" viewBox="0 0 20 20" fill="#000">
    <rect width="20" height="17" />
    <path d="M4 18l3-3h3z" />
    <path d="M4 5h12M4 9h12M4 13h7" stroke="#fff" strokeWidth="1.200" />
  </svg>
);

const CursorIcon = () => (
  <svg width="18" height="27" viewBox="0 0 18 27">
    <path d="M1 1v20l5-4 4 9 3-1-4-9h7z" fill="#fff" stroke="#333" strokeWidth="1.200" />
  </svg>
);

/* ---------- data ---------- */
const tabs = [
  { label: 'Файл', x: 18 },
  { label: 'Задача', x: 31, active: true },
  { label: 'Ресурс', x: 27 },
  { label: 'Отчет', x: 30 },
  { label: 'Проект', x: 30 },
  { label: 'Вид', x: 31 },
  { label: 'Справка', x: 30 },
  { label: 'Формат диаграммы Ганта', x: 39, contextual: true },
];

const months = [
  ['Октябрь', 'Окт', 31], ['Ноябрь', 'Ноя', 30], ['Декабрь', 'Дек', 31], ['Январь', 'Янв', 31],
  ['Февраль', 'Фев', 28], ['Март', 'Мар', 31], ['Апрель', 'Апр', 30], ['Май', 'Май', 31],
  ['Июнь', 'Июн', 30], ['Июль', 'Июл', 31], ['Август', 'Авг', 31], ['Сентябрь', 'Сен', 30],
  ['Октябрь', 'Окт', 31], ['Ноябрь', 'Ноя', 30], ['Декабрь', 'Дек', 31], ['Январь', 'Янв', 31],
];

const tasks = [
  { id: 1, h: 71, name: ['жилой 9-ти этажный дом', 'из силикатного кирпича'], end: 1509 },
  { id: 14, h: 71, name: ['10-и этажный жилой', 'дом со встроенными', 'помещениями'], end: 1341 },
  { id: 27, h: 48, name: ['5-7-и этажный жилой', 'монолитный дом'], end: 1225 },
  { id: 40, h: 48, name: ['14-ти этажная гостиница'], end: 1345 },
  { id: 53, h: 94, name: ['4-х этажный', 'медицинский', 'реабилитационный', 'центр'], end: 1895, fillEnd: 1796, open: true },
];

const BLANK_ROWS = 16;
const SELECTED_BLANK = 6;
const barStart = 730;

export default function App() {
  return (
    <Page>
      <GlobalStyle />
      <TitleBar>
        <QuickAccess>
          <QuickButton $w={24}><SaveIcon /></QuickButton>
          <QuickButton $w={32} $ml={5}><UndoIcon /></QuickButton>
          <QuickButton $w={12}><Chevron color="#fff" /></QuickButton>
          <QuickButton $w={34} $ml={4}><UndoIcon flip color="#8fb58d" /></QuickButton>
          <QuickButton $w={12}><Chevron color="#8fb58d" /></QuickButton>
          <QuickButton $w={34} $ml={2}><QatIcon /></QuickButton>
        </QuickAccess>
        <DocTitle>{'Приложение 1_2 к примеру по практ раб  -  Project профессиональный'}</DocTitle>
        <AccountArea>
          <WarningIcon />
          <UserName>top1977@ya.ru</UserName>
          <Avatar>T</Avatar>
          <WindowButton><MinIcon /></WindowButton>
          <WindowButton><RestoreIcon /></WindowButton>
          <WindowButton><CloseIcon /></WindowButton>
        </AccountArea>
      </TitleBar>

      <TabsRow>
        {tabs.map((tab) => (
          <Tab key={tab.label} $x={tab.x} $active={tab.active} $contextual={tab.contextual}>{tab.label}</Tab>
        ))}
        <TellMe>
          <SearchIcon />
          Что вы хотите сделать?
        </TellMe>
        <DocControls>
          <WindowButton><RestoreIcon color="#555" /></WindowButton>
          <WindowButton><CloseIcon color="#555" /></WindowButton>
        </DocControls>
      </TabsRow>

      <Ribbon>
        <Group $w={104}>
          <GroupBody>
            <Large $w={104}>
              <LargeIcon><GanttIcon /></LargeIcon>
              <LargeLine>Диаграмма</LargeLine>
              <LargeLine>Ганта <Chevron /></LargeLine>
            </Large>
          </GroupBody>
          <GroupLabel>Вид</GroupLabel>
        </Group>

        <Group $w={135}>
          <GroupBody>
            <Large $w={74} $ml={6}>
              <LargeIcon><PasteIcon /></LargeIcon>
              <LargeLine>Вставить</LargeLine>
              <LargeLine><Chevron /></LargeLine>
            </Large>
            <Stack $mt={-3}>
              <StackRow $h={29}><IconSlot $w={1} /><CutIcon /></StackRow>
              <StackRow $h={29}><CopyIcon /><IconSlot $w={21}><Chevron /></IconSlot></StackRow>
              <StackRow $h={29}><BrushIcon /></StackRow>
            </Stack>
          </GroupBody>
          <GroupLabel>Буфер обмена</GroupLabel>
        </Group>

        <Group $w={212}>
          <GroupBody $pl={10}>
            <FontColumn>
              <SelectRow>
                <FieldBox $w={117}>Calibri<Chevron color="#333" /></FieldBox>
                <FieldBox $w={73}>11<Chevron color="#333" /></FieldBox>
              </SelectRow>
              <FormatRow>
                <FormatLetter $b>Ж</FormatLetter>
                <FormatLetter $i>К</FormatLetter>
                <FormatLetter $u>Ч</FormatLetter>
                <Divider $m="0 0 0 5px" />
                <IconSlot $w={35}><FillIcon /></IconSlot>
                <IconSlot $w={12} $mr={10}><Chevron /></IconSlot>
                <IconSlot $w={22} $mr={5}><FontColorIcon /></IconSlot>
                <IconSlot $w={12}><Chevron /></IconSlot>
              </FormatRow>
            </FontColumn>
          </GroupBody>
          <GroupLabel $pr={22}>
            Шрифт
            <Launcher><LauncherIcon /></Launcher>
          </GroupLabel>
        </Group>

        <Group $w={360}>
          <GroupBody $pl={10}>
            <PercentColumn>
              <PercentRow>
                {[['0%', 0], ['25%', 4], ['50%', 8], ['75%', 12], ['100%', 16]].map(([label, fill]) => (
                  <PercentItem key={label}><PercentIcon fill={fill} />{label}</PercentItem>
                ))}
              </PercentRow>
              <PlanRow>
                <IconSlot $w={30}><OutdentIcon /></IconSlot>
                <IconSlot $w={30}><OutdentIcon flip /></IconSlot>
                <Divider $m="0 2px 0 3px" />
                <IconSlot $w={33}><SplitIcon /></IconSlot>
                <Divider $m="0 3px 0 1px" />
                <IconSlot $w={30}><LinkIcon /></IconSlot>
                <IconSlot $w={30}><LinkIcon broken /></IconSlot>
              </PlanRow>
            </PercentColumn>
            <Stack>
              <StackRow><IconSlot $w={26} $mr={2}><ScheduleIcon /></IconSlot>По графику<IconSlot $w={38}><Chevron /></IconSlot></StackRow>
              <StackRow><IconSlot $w={26} $mr={2}><RespectIcon /></IconSlot>Соблюдать связи</StackRow>
              <StackRow $off><IconSlot $w={26} $mr={2}><InactiveIcon /></IconSlot>Сделать неактивной</StackRow>
            </Stack>
          </GroupBody>
          <GroupLabel>Планирование</GroupLabel>
        </Group>

        <Group $w={402}>
          <GroupBody>
            <Large $w={105} $ml={13} $off>
              <LargeIcon><PinIcon size={38} fill="#d0d0d0" stroke="#a8a8a8" sw={1} /></LargeIcon>
              <LargeLine>Планирование</LargeLine>
              <LargeLine>вручную</LargeLine>
            </Large>
            <Large $w={116} $ml={4} $off>
              <LargeIcon><AutoIcon /></LargeIcon>
              <LargeLine>Автоматическое</LargeLine>
              <LargeLine>планирование</LargeLine>
            </Large>
            <Divider $h={74} $m="-14px 8px 0 7px" />
            <Stack>
              <StackRow><IconSlot $w={24} $mr={1}><InspectIcon /></IconSlot>Проверить<IconSlot $w={38}><Chevron /></IconSlot></StackRow>
              <StackRow $off><IconSlot $w={24} $mr={1}><MoveIcon /></IconSlot>Переместить<IconSlot $w={20}><Chevron color="#b5b5b5" /></IconSlot></StackRow>
              <StackRow><IconSlot $w={24} $mr={1}><ModeIcon /></IconSlot>Режим<IconSlot $w={18}><Chevron /></IconSlot></StackRow>
            </Stack>
          </GroupBody>
          <GroupLabel>Задачи</GroupLabel>
        </Group>

        <Group $w={267}>
          <GroupBody>
            <Large $w={66} $ml={3}>
              <LargeIcon><NewTaskIcon /></LargeIcon>
              <LargeLine>Задача</LargeLine>
              <LargeLine><Chevron /></LargeLine>
            </Large>
            <Stack>
              <StackRow><IconSlot $w={20} $mr={3}><SummaryIcon /></IconSlot>Суммарная задача</StackRow>
              <StackRow><IconSlot $w={20} $mr={3}><MilestoneIcon /></IconSlot>Веха</StackRow>
              <StackRow $off><IconSlot $w={20} $mr={3}><DeliverableIcon /></IconSlot>Конечный результат<IconSlot $w={18}><Chevron color="#b5b5b5" /></IconSlot></StackRow>
            </Stack>
          </GroupBody>
          <GroupLabel>Вставить</GroupLabel>
        </Group>

        <Group $w={120}>
          <GroupBody>
            <Large $w={80} $ml={7}>
              <LargeIcon>
                <CardHolder>
                  <BlueCard />
                  <InfoHolder><InfoBadge /></InfoHolder>
                </CardHolder>
              </LargeIcon>
              <LargeLine>Сведения</LargeLine>
            </Large>
            <Stack $mt={-2}>
              <StackRow $h={29}><IconSlot $w={20}><NoteIcon /></IconSlot></StackRow>
              <StackRow $h={29}><IconSlot $w={20}><DetailsIcon /></IconSlot></StackRow>
              <StackRow $h={29}><IconSlot $w={20}><AddTimelineIcon /></IconSlot></StackRow>
            </Stack>
          </GroupBody>
          <GroupLabel>Свойства</GroupLabel>
        </Group>

        <Group $w={133}>
          <GroupBody>
            <Large $w={72} $ml={8}>
              <LargeIcon>
                <CardHolder>
                  <BlueCard />
                  <CursorHolder><CursorIcon /></CursorHolder>
                </CardHolder>
              </LargeIcon>
              <LargeLine>Перейти</LargeLine>
              <LargeLine>к задаче</LargeLine>
            </Large>
            <Stack $mt={-3}>
              <StackRow $h={29}><IconSlot $w={20}><SearchIcon size={20} /></IconSlot><IconSlot $w={21}><Chevron /></IconSlot></StackRow>
              <StackRow $h={29}><IconSlot $w={20}><EraserIcon /></IconSlot><IconSlot $w={18}><Chevron /></IconSlot></StackRow>
              <StackRow $h={29}><IconSlot $w={20}><FillDownIcon /></IconSlot><IconSlot $w={18}><Chevron /></IconSlot></StackRow>
            </Stack>
          </GroupBody>
          <GroupLabel>Редактирование</GroupLabel>
        </Group>

        <Collapse>
          <svg width="13" height="7" viewBox="0 0 13 7" fill="none" stroke="#444"><path d="M.5 6.500l6-6 6 6" /></svg>
        </Collapse>
      </Ribbon>

      <Workspace>
        <SideStrip><SideLabel>ДИАГРАММА ГАНТА</SideLabel></SideStrip>
        <ViewArea>
          <Panes>
            <TablePane>
              <HeaderRow $h={53}>
                <HeadCell />
                <HeadCell $center><InfoHead /></HeadCell>
                <HeadCell>
                  <span>Режим<br />задачи<HeadArrow><Tri /></HeadArrow></span>
                </HeadCell>
                <NameHead>Название задачи<NameArrow><Tri color={green} /></NameArrow></NameHead>
              </HeaderRow>
              {tasks.map((task) => (
                <TableRow key={task.id} $h={task.h}>
                  <RowHead>{task.id}</RowHead>
                  <InfoCell />
                  <ModeCell><PinIcon /></ModeCell>
                  <NameCell>
                    <Expander><ExpandArrow /></Expander>
                    <TaskName>
                      {task.name.map((line) => <div key={line}>{line}</div>)}
                    </TaskName>
                  </NameCell>
                </TableRow>
              ))}
              {Array.from({ length: BLANK_ROWS }, (_, i) => {
                const selected = i === SELECTED_BLANK;
                return (
                  <TableRow key={i} $h={26} $selected={selected}>
                    <RowHead $selected={selected} />
                    <InfoCell $selected={selected} />
                    <ModeCell />
                    <NameCell $selected={selected} />
                  </TableRow>
                );
              })}
            </TablePane>
            <Splitter />
            <ChartPane>
              <TimeHeader>
                {months.map(([full, short, days], i) => (
                  <Month key={`${full}${i}`} $w={days * 3.16}>
                    <MonthFull>{full}</MonthFull>
                    <MonthShort>{short}</MonthShort>
                  </Month>
                ))}
              </TimeHeader>
              {tasks.map((task) => {
                const width = task.end - barStart;
                const fill = task.fillEnd ? `${task.fillEnd - barStart - 3}px` : '100%';
                return (
                  <ChartRow key={task.id} $h={task.h}>
                    <SummaryBar $w={width} $open={task.open}><BarFill $w={fill} /></SummaryBar>
                  </ChartRow>
                );
              })}
              {Array.from({ length: BLANK_ROWS }, (_, i) => (
                <ChartRow key={i} $h={26} $selected={i === SELECTED_BLANK} />
              ))}
              <DateLine $x={472} />
              <DateLine $x={1454} />
            </ChartPane>
            <VScroll>
              <ScrollBtn><Tri dir="up" size={12} /></ScrollBtn>
              <VThumb />
              <VGap />
              <ScrollBtn><Tri dir="down" size={12} /></ScrollBtn>
              <VGrip />
            </VScroll>
          </Panes>
          <HScrollRow>
            <HScroll $w={403}>
              <ScrollBtn><Tri dir="left" /></ScrollBtn>
              <HThumb $w={66} />
              <HEnd><ScrollBtn><Tri dir="right" /></ScrollBtn></HEnd>
            </HScroll>
            <Splitter />
            <HScroll $w={1481}>
              <ScrollBtn><Tri dir="left" /></ScrollBtn>
              <HThumb $w={666} />
              <HEnd $mr={20}><ScrollBtn><Tri dir="right" /></ScrollBtn></HEnd>
            </HScroll>
          </HScrollRow>
        </ViewArea>
      </Workspace>

      <StatusBar>
        <StatusText $ml={10}>Готово</StatusText>
        <StatusText $ml={39}><PinIcon size={20} fill="none" stroke="#444" sw={1.2} />Новые задачи : Планирование вручную</StatusText>
        <ViewButtons>
          <ViewButton $active><ViewGlyph kind="gantt" /></ViewButton>
          <ViewButton><ViewGlyph kind="split" /></ViewButton>
          <ViewButton><ViewGlyph kind="team" /></ViewButton>
          <ViewButton><ViewGlyph kind="sheet" /></ViewButton>
          <ViewButton><CalendarGlyph /></ViewButton>
        </ViewButtons>
        <Zoom>
          −
          <ZoomTrack><ZoomThumb /><ZoomTick /></ZoomTrack>
          +
        </Zoom>
      </StatusBar>

      <Taskbar>
        <StartButton><WinLogo /></StartButton>
        <SearchBox>
          <IconSlot $w={50}><SearchIcon size={20} color="#222" /></IconSlot>
          <SearchHint>Введите здесь текст для поиска</SearchHint>
          <Otter />
        </SearchBox>
        <TaskButton><TaskViewIcon /></TaskButton>
        <TaskButton><ZoomApp /></TaskButton>
        <TaskButton $open><ExplorerApp /></TaskButton>
        <TaskButton><GearApp /></TaskButton>
        <TaskButton><DragonApp /></TaskButton>
        <TaskButton $open><YandexApp /></TaskButton>
        <TaskButton $open><TorrentApp /></TaskButton>
        <TaskButton $open><WordApp /></TaskButton>
        <TaskButton $open><RarApp /></TaskButton>
        <TaskButton $open $active><ProjectApp /></TaskButton>
        <Tray>
          <TrayItem $w={30}><ChevronUpTray /></TrayItem>
          <TrayItem $w={28}><MicIcon /></TrayItem>
          <TrayItem $w={34}><BatteryIcon /></TrayItem>
          <TrayItem $w={29}><WifiIcon /></TrayItem>
          <TrayItem $w={27}><SpeakerIcon /></TrayItem>
          <TrayItem $w={34}><CloudOff /></TrayItem>
          <TrayItem $w={40}>РУС</TrayItem>
          <Clock $w={90}><span>11:37</span><span>20.09.2022</span></Clock>
          <TrayItem $w={46}>
            <NoticeIcon><NoticeGlyph /><NoticeBadge>1</NoticeBadge></NoticeIcon>
          </TrayItem>
        </Tray>
      </Taskbar>
    </Page>
  );
}
